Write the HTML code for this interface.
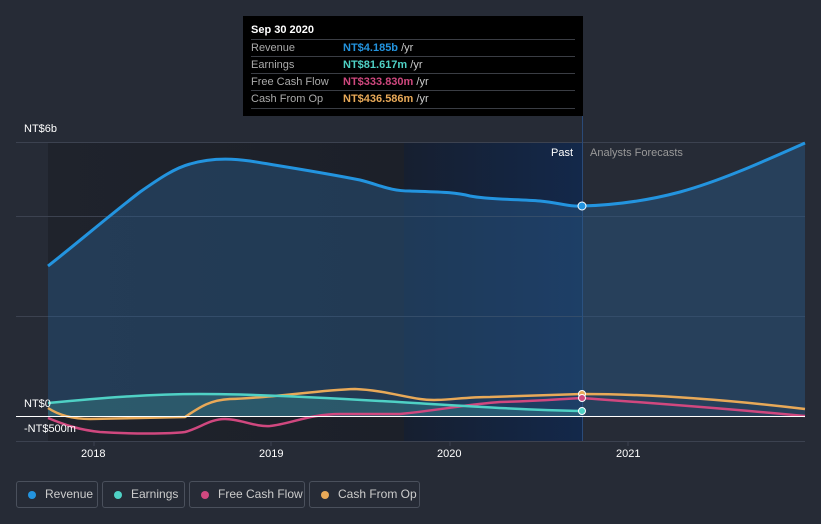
<!DOCTYPE html>
<html><head><style>
body{margin:0;width:821px;height:524px;background:#262b36;font-family:"Liberation Sans",sans-serif;overflow:hidden;position:relative}
.t{position:absolute;color:#fff;font-size:11px}
.tip{position:absolute;left:243px;top:16px;width:340px;height:100px;background:#000}
.row{position:absolute;left:8px;width:324px;border-top:1px solid #3a3d44;font-size:11px;color:#aaa;height:17px;line-height:17px}
.row b{position:absolute;left:92px;font-weight:bold}
.row i{font-style:normal;color:#ccc;font-weight:normal}
.lg{position:absolute;top:481px;height:27px;border:1px solid #4a505c;border-radius:3px;box-sizing:border-box;color:#ccc;font-size:12px;line-height:25px;padding-left:28px}
.lg:before{content:"";position:absolute;left:11px;top:9px;width:8px;height:8px;border-radius:50%;background:var(--c)}
</style></head><body>
<svg width="821" height="524" style="position:absolute;left:0;top:0">
<defs>
<linearGradient id="pg" x1="0" x2="1"><stop offset="0" stop-color="#1f232c"/><stop offset="1" stop-color="#1c2029"/></linearGradient>
<linearGradient id="hg" x1="0" x2="1"><stop offset="0" stop-color="#161f30"/><stop offset="1" stop-color="#13284a"/></linearGradient>
</defs>
<rect x="48" y="142" width="356" height="299" fill="url(#pg)"/>
<rect x="404" y="142" width="178" height="299" fill="url(#hg)"/>
<g stroke="#3c4250" stroke-width="1">
<line x1="16" y1="142.5" x2="805" y2="142.5"/><line x1="16" y1="216.5" x2="805" y2="216.5"/><line x1="16" y1="316.5" x2="805" y2="316.5"/><line x1="16" y1="441.5" x2="805" y2="441.5"/>
<line x1="94" y1="441" x2="94" y2="446"/><line x1="271" y1="441" x2="271" y2="446"/><line x1="450" y1="441" x2="450" y2="446"/><line x1="628" y1="441" x2="628" y2="446"/>
</g>
<line x1="582.5" y1="116" x2="582.5" y2="441" stroke="#2a4a78"/>
<path d="M48,266 C75,245 110,215 140,192 C160,178 175,168 190,164 C210,158 230,158 250,161 C280,166 320,172 360,180 C380,185 390,191 410,191 C440,192 455,192 470,196 C490,200 520,199 540,201 C560,203 570,207 582,206 C620,205 650,200 680,192 C720,181 760,163 805,143 L805,416 L48,416Z" fill="#2a5a8a" fill-opacity="0.45"/>
<path d="M48,403 C100,398 150,394 200,394 C260,394 330,398 380,401 C450,405 520,410 582,411 L582,416 L48,416Z" fill="#4fd1c5" fill-opacity="0.2"/>
<path d="M48,408 C60,416 75,419 90,419 L185,417 C200,407 210,400 230,399 C270,398 320,390 355,389 C380,390 400,396 420,399 C440,402 460,397 490,397 L582,394 C650,394 720,399 805,409" fill="none" stroke="#e8a958" stroke-width="2.5"/>
<path d="M48,418 C65,425 80,430 100,432 C130,434 170,434 185,432 C200,428 210,419 225,419 C240,419 255,427 270,426 C290,424 310,414 340,414 L400,414 C440,410 470,404 500,402 C540,401 560,399 582,398 C650,403 720,408 805,416" fill="none" stroke="#d0487f" stroke-width="2.5"/>
<path d="M48,403 C100,398 150,394 200,394 C260,394 330,398 380,401 C450,405 520,410 582,411" fill="none" stroke="#4fd1c5" stroke-width="2.5"/>
<path d="M48,266 C75,245 110,215 140,192 C160,178 175,168 190,164 C210,158 230,158 250,161 C280,166 320,172 360,180 C380,185 390,191 410,191 C440,192 455,192 470,196 C490,200 520,199 540,201 C560,203 570,207 582,206 C620,205 650,200 680,192 C720,181 760,163 805,143" fill="none" stroke="#2394df" stroke-width="3"/>
<line x1="16" y1="416.5" x2="805" y2="416.5" stroke="#fff" stroke-width="1"/>
<circle cx="582" cy="206" r="4" fill="#2394df" stroke="#fff" stroke-width="1"/>
<circle cx="582" cy="394" r="3.5" fill="#e8a958" stroke="#fff" stroke-width="1"/>
<circle cx="582" cy="398" r="3.5" fill="#d0487f" stroke="#fff" stroke-width="1"/>
<circle cx="582" cy="411" r="3.5" fill="#4fd1c5" stroke="#fff" stroke-width="1"/>
</svg>
<div class="t" style="left:24px;top:123px">NT$6b</div>
<div class="t" style="left:24px;top:398px">NT$0</div>
<div class="t" style="left:24px;top:423px">-NT$500m</div>
<div class="t" style="left:551px;top:147px">Past</div>
<div class="t" style="left:590px;top:147px;color:#999">Analysts Forecasts</div>
<div class="t" style="left:81px;top:448px">2018</div>
<div class="t" style="left:259px;top:448px">2019</div>
<div class="t" style="left:437px;top:448px">2020</div>
<div class="t" style="left:616px;top:448px">2021</div>
<div class="tip">
<div style="position:absolute;left:8px;top:8px;color:#fff;font-weight:bold;font-size:11px">Sep 30 2020</div>
<div class="row" style="top:23px">Revenue<b style="color:#2394df">NT$4.185b <i>/yr</i></b></div>
<div class="row" style="top:40px">Earnings<b style="color:#4fd1c5">NT$81.617m <i>/yr</i></b></div>
<div class="row" style="top:57px">Free Cash Flow<b style="color:#d0487f">NT$333.830m <i>/yr</i></b></div>
<div class="row" style="top:74px;border-bottom:1px solid #3a3d44">Cash From Op<b style="color:#e8a958">NT$436.586m <i>/yr</i></b></div>
</div>
<div class="lg" style="left:16px;width:82px;--c:#2394df">Revenue</div>
<div class="lg" style="left:102px;width:83px;--c:#4fd1c5">Earnings</div>
<div class="lg" style="left:189px;width:116px;--c:#d0487f">Free Cash Flow</div>
<div class="lg" style="left:309px;width:111px;--c:#e8a958">Cash From Op</div>
</body></html>
